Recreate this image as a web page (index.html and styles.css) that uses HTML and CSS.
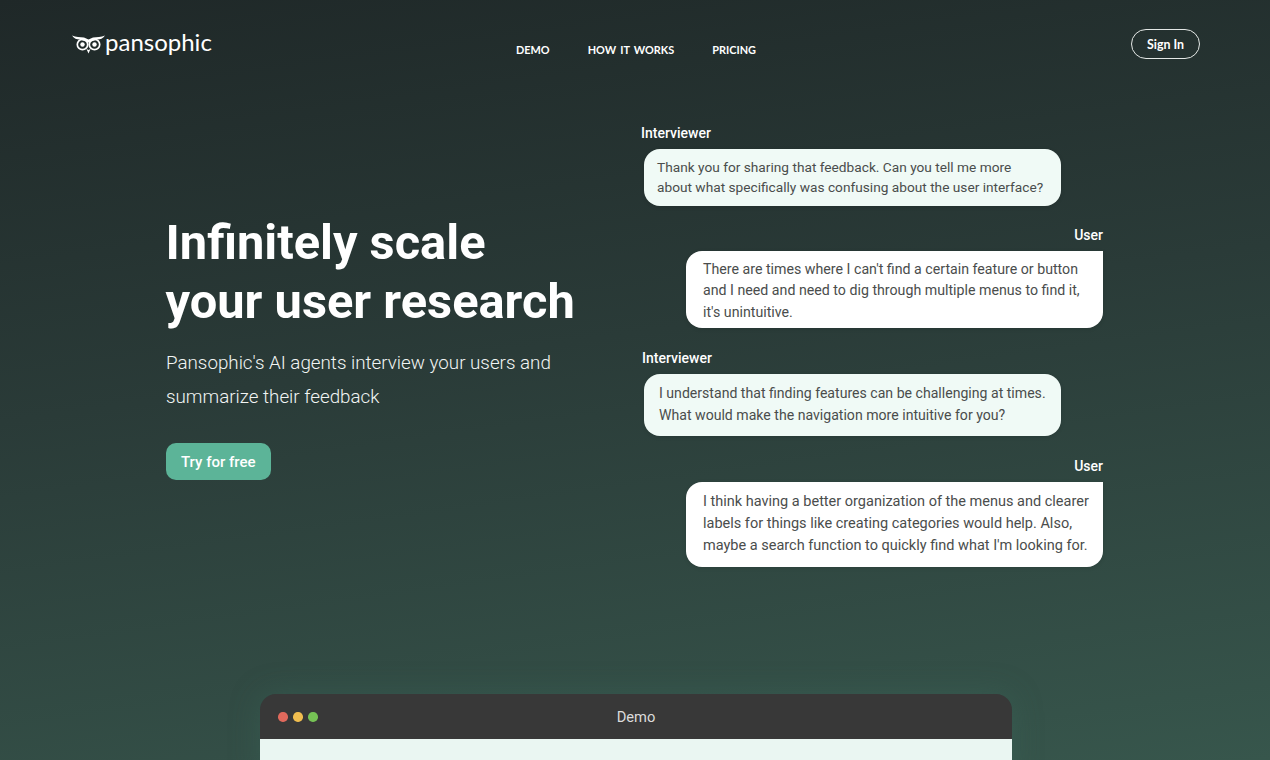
FILE: index.html
```html
<!DOCTYPE html>
<html lang="en">
<head>
<meta charset="utf-8">
<title>Pansophic</title>
<link rel="stylesheet" href="styles.css">
</head>
<body>
<div class="page">
  <header class="topbar">
    <a class="logo" href="#">
      <svg class="owl" viewBox="0 0 33 20" width="33" height="20" aria-hidden="true">
        <path d="M0 1.5 C4 3 8 3 12 3.6 L16.5 5.4 L21 3.6 C25 3 29 3 33 1.5 C30.5 5 27.5 5.6 25 5.4 L16.5 8.4 L8 5.4 C5.5 5.6 2.5 5 0 1.5Z" fill="#fff"/>
        <circle cx="10.5" cy="10.5" r="5.2" fill="none" stroke="#fff" stroke-width="1.7"/>
        <circle cx="22.5" cy="10.5" r="5.2" fill="none" stroke="#fff" stroke-width="1.7"/>
        <circle cx="10.5" cy="10.5" r="2.2" fill="#fff"/>
        <circle cx="22.5" cy="10.5" r="2.2" fill="#fff"/>
        <path d="M14.5 15 L16.5 19.5 L18.5 15 L16.5 16Z" fill="#fff"/>
      </svg>
      <span class="wordmark">pansophic</span>
    </a>
    <nav class="nav">
      <a href="#">DEMO</a>
      <a href="#">HOW IT WORKS</a>
      <a href="#">PRICING</a>
    </nav>
    <a class="signin" href="#">Sign In</a>
  </header>

  <main class="hero">
    <section class="pitch">
      <h1>Infinitely scale<br>your user research</h1>
      <p>Pansophic's AI agents interview your users and summarize their feedback</p>
      <a class="cta" href="#">Try for free</a>
    </section>
    <section class="chat">
      <div class="speaker s1">Interviewer</div>
      <div class="bubble agent b1">Thank you for sharing that feedback. Can you tell me more about what specifically was confusing about the user interface?</div>
      <div class="speaker right s2">User</div>
      <div class="bubble person b2">There are times where I can't find a certain feature or button and I need and need to dig through multiple menus to find it, it's unintuitive.</div>
      <div class="speaker s3">Interviewer</div>
      <div class="bubble agent b3">I understand that finding features can be challenging at times. What would make the navigation more intuitive for you?</div>
      <div class="speaker right s4">User</div>
      <div class="bubble person b4">I think having a better organization of the menus and clearer labels for things like creating categories would help. Also, maybe a search function to quickly find what I'm looking for.</div>
    </section>
  </main>

  <section class="window">
    <div class="titlebar">
      <div class="lights"><i class="red"></i><i class="amber"></i><i class="green"></i></div>
      <span class="wintitle">Demo</span>
    </div>
    <div class="winbody"></div>
  </section>
</div>
</body>
</html>
```
FILE: styles.css
```css
* { box-sizing: border-box; }
html, body { margin: 0; height: 100%; overflow: hidden; }
body { font-family: Roboto, "Liberation Sans", sans-serif; color: #fff; }
a { color: inherit; text-decoration: none; }

.page {
  height: 760px;
  overflow: hidden;
  background: linear-gradient(172deg, #1f2828 0%, #2a3b38 45%, #37564c 100%);
  display: flex;
  flex-direction: column;
}

.topbar {
  height: 100px;
  padding: 29px 70px 0 72px;
  display: grid;
  grid-template-columns: 1fr auto 1fr;
  align-items: start;
  flex: none;
}
.logo { display: flex; align-items: center; gap: 0; height: 30px; }
.owl { flex: none; }
.wordmark {
  font-family: Lato, sans-serif;
  font-weight: 400;
  font-size: 24px;
  line-height: 30px;
  margin-top: -5px;
}
.nav {
  display: flex;
  gap: 38px;
  padding-top: 14px;
  font-family: Lato, sans-serif;
  font-weight: 700;
  font-size: 10.9px;
  line-height: 14px;
  word-spacing: 1.5px;
}
.signin {
  justify-self: end;
  width: 69px;
  height: 30px;
  border: 1px solid #e4e8e6;
  border-radius: 15px;
  display: flex;
  align-items: center;
  justify-content: center;
  font-family: Lato, sans-serif;
  font-weight: 700;
  font-size: 12.4px;
}

.hero {
  display: flex;
  align-items: flex-start;
  padding-left: 166px;
  flex: none;
  height: 594px;
}
.pitch { width: 475px; padding-top: 113px; flex: none; }
h1 {
  margin: 0 0 0 -0.5px;
  font-size: 48.8px;
  line-height: 59px;
  font-weight: 700;
}
.pitch p {
  margin: 15px 0 0;
  width: 400px;
  font-size: 18.8px;
  line-height: 34px;
  font-weight: 300;
  color: #f2f5f4;
}
.cta {
  display: inline-flex;
  align-items: center;
  justify-content: center;
  margin-top: 29px;
  width: 104.5px;
  height: 37px;
  border-radius: 10px;
  background: #5cb498;
  font-size: 15px;
  font-weight: 500;
}

.chat { width: 462px; flex: none; padding-top: 25px; display: flex; flex-direction: column; }
.speaker { font-size: 14px; line-height: 16px; font-weight: 500; }
.speaker.right { text-align: right; }
.bubble {
  width: 417px;
  color: #4a4d4c;
  box-shadow: 0 1px 4px rgba(0, 0, 0, .12);
}
.agent { margin-left: 3px; background: #f0faf6; border-radius: 16px; }
.person { margin-left: 45px; background: #fff; border-radius: 16px 0 16px 16px; }
.s2 { margin-top: 21px; }
.s3 { margin-top: 22px; }
.s4 { margin-top: 22px; }
.s1, .s2, .s3, .s4 { margin-bottom: 8px; }
.s3 { padding-left: 1px; }
.b1 { padding: 8px 16px 8px 13px; height: 57px; font-size: 13.7px; line-height: 20px; }
.b2 { padding: 8px 17px 7px; height: 77px; font-size: 14.2px; line-height: 21.3px; }
.b3 { padding: 9px 8px 8px 15px; height: 62px; font-size: 14.1px; line-height: 21.5px; }
.b4 { padding: 9px 10px 8px 17px; height: 85px; font-size: 14.5px; line-height: 22px; }

.window {
  width: 752px;
  margin-left: 260px;
  flex: none;
  box-shadow: 0 0 30px rgba(60, 110, 95, .35);
  border-radius: 16px 16px 0 0;
}
.titlebar {
  height: 45px;
  background: #383838;
  border-radius: 16px 16px 0 0;
  display: flex;
  align-items: center;
  justify-content: center;
  position: relative;
}
.lights { position: absolute; left: 18px; top: 18px; display: flex; gap: 5.5px; }
.lights i { width: 9.5px; height: 9.5px; border-radius: 50%; display: block; }
.red { background: #e0695c; }
.amber { background: #f0bd4f; }
.green { background: #76c255; }
.wintitle { font-size: 14.7px; color: #dcdcdc; padding-top: 1px; }
.winbody { height: 40px; background: #eaf6f2; }
```
